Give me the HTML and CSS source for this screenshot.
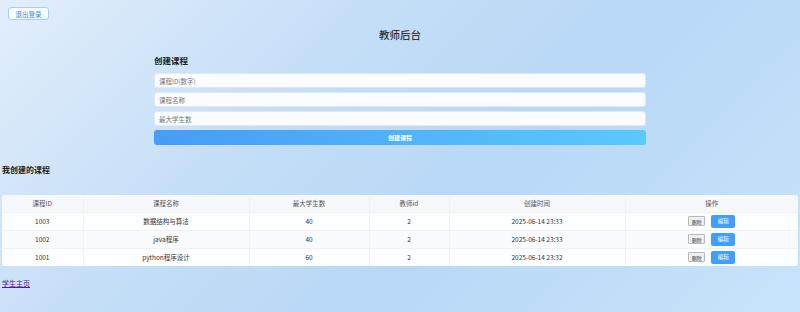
FILE: index.html
```html
<!DOCTYPE html>
<html lang="zh">
<head>
<meta charset="utf-8">
<title>教师后台</title>
<link rel="stylesheet" href="styles.css">
</head>
<body>
<div class="page">
  <div class="topbar"><button class="logout">退出登录</button></div>
  <h1 class="title">教师后台</h1>
  <div class="form">
    <h2 class="form-title">创建课程</h2>
    <input class="field" placeholder="课程ID(数字)">
    <input class="field" placeholder="课程名称">
    <input class="field" placeholder="最大学生数">
    <button class="create">创建课程</button>
  </div>
  <h3 class="list-title">我创建的课程</h3>
  <table class="courses">
    <colgroup>
      <col class="c1"><col class="c2"><col class="c3"><col class="c4"><col class="c5"><col class="c6">
    </colgroup>
    <thead>
      <tr><th>课程ID</th><th>课程名称</th><th>最大学生数</th><th>教师id</th><th>创建时间</th><th>操作</th></tr>
    </thead>
    <tbody>
      <tr><td>1003</td><td>数据结构与算法</td><td>40</td><td>2</td><td>2025-06-14 23:33</td><td><button class="del">删除</button><button class="edit">编辑</button></td></tr>
      <tr><td>1002</td><td>java程序</td><td>40</td><td>2</td><td>2025-06-14 23:33</td><td><button class="del">删除</button><button class="edit">编辑</button></td></tr>
      <tr><td>1001</td><td>python程序设计</td><td>60</td><td>2</td><td>2025-06-14 23:32</td><td><button class="del">删除</button><button class="edit">编辑</button></td></tr>
    </tbody>
  </table>
  <a class="student-link" href="#">学生主页</a>
</div>
</body>
</html>
```
FILE: styles.css
```css
* { box-sizing: border-box; }
html, body { margin: 0; height: 100%; }
body {
  font-family: "Noto Sans CJK SC", "Noto Sans", sans-serif;
  font-size: 7px;
  color: #333;
  background: linear-gradient(135deg, #e2eefc 0%, #c4def7 35%, #b8d8f6 60%, #c8e4fb 100%);
}
.page { padding: 0 2px; min-height: 312px; }
.topbar { padding: 7px 0 0 6px; height: 20px; }
.logout {
  display: block;
  width: 41px; height: 13px;
  padding: 0;
  font: inherit; font-size: 6.5px;
  color: #3a8ee6;
  background: #f7fbff;
  border: 1px solid #a9cdf5;
  border-radius: 3px;
}
.title {
  margin: 7px 0 0;
  text-align: center;
  font-size: 10.5px; font-weight: 500; line-height: 16px;
  color: #333;
}
.form { width: 492px; margin: 11px auto 0; display: flex; flex-direction: column; gap: 4px; }
.form-title {
  margin: 0 0 3px;
  font-size: 8.5px; font-weight: 700; line-height: 12px; color: #222;
}
.field {
  height: 15px;
  padding: 0 4px;
  font: inherit; font-size: 6.5px;
  background: #fafcff;
  border: 1px solid #e2e8ef;
  border-radius: 3px;
  color: #333;
}
.field::placeholder { color: #777; }
.create {
  height: 15px;
  font: inherit; font-size: 6px; font-weight: 700;
  color: #fff;
  border: none; border-radius: 3px;
  background: linear-gradient(90deg, #479cf5 0%, #5bc9fc 100%);
}
.list-title {
  margin: 19px 0 0;
  font-size: 8px; font-weight: 700; line-height: 11px; color: #222;
}
.courses {
  width: 796px;
  margin-top: 20px;
  border-collapse: collapse;
  background: #fff;
  border-radius: 3px;
  overflow: hidden;
  table-layout: fixed;
  font-size: 6.5px;
}
.c1 { width: 81px; } .c2 { width: 166px; } .c3 { width: 120px; }
.c4 { width: 80px; } .c5 { width: 176px; } .c6 { width: 173px; }
.courses th, .courses td {
  text-align: center;
  padding: 0;
  border-bottom: 1px solid #eef1f5;
  border-right: 1px solid #f0f2f6;
}
.courses th:last-child, .courses td:last-child { border-right: none; }
.courses tbody tr:last-child td { border-bottom: none; }
.courses th { height: 17px; font-weight: 400; color: #555; background: #f6f8fc; }
.courses td { height: 18px; color: #333; background: #fdfeff; }
.courses tbody tr:nth-child(2) td { background: #f9fbfd; }
.del {
  width: 17px; height: 10px; padding: 0;
  font: inherit; font-size: 5px; color: #333;
  background: #efefef; border: 1px solid #b8b8b8; border-radius: 1px;
  vertical-align: middle;
}
.edit {
  width: 24px; height: 13px; padding: 0; margin-left: 6px;
  font: inherit; font-size: 5.5px; color: #fff;
  background: #409eff; border: none; border-radius: 2px;
  vertical-align: middle;
}
.student-link {
  display: inline-block;
  margin-top: 12px;
  font-size: 7px; line-height: 10px;
  color: #551a8b;
}
```
